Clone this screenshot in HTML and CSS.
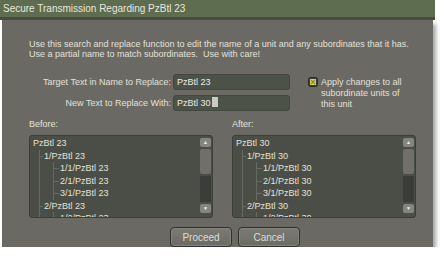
FILE: index.html
```html
<!DOCTYPE html>
<html lang="en">
<head>
    <meta charset="UTF-8">
    <title>Secure Transmission</title>
    <link rel="stylesheet" href="styles.css">
</head>
<body>
    <div class="window">
        <div class="titlebar">Secure Transmission Regarding PzBtl 23</div>
        <div class="dialog">
            <p class="intro">Use this search and replace function to edit the name of a unit and any subordinates that it has.<br>Use a partial name to match subordinates.&nbsp; Use with care!</p>

            <div class="fields">
                <div class="field-rows">
                    <div class="field">
                        <span class="field-label">Target Text in Name to Replace:</span>
                        <div class="text-input">PzBtl 23</div>
                    </div>
                    <div class="field">
                        <span class="field-label">New Text to Replace With:</span>
                        <div class="text-input">PzBtl 30<span class="caret"></span></div>
                    </div>
                </div>
                <div class="apply">
                    <svg class="check" width="10" height="10" viewBox="0 0 10 10">
                        <rect x="0.5" y="0.5" width="9" height="9" rx="2" fill="#3b3d33" stroke="#2c2d27"/>
                        <rect x="2" y="2" width="6" height="6" fill="#d9d15c"/>
                        <path d="M3 3 L7 7 M7 3 L3 7" stroke="#8c8638" stroke-width="1.2"/>
                    </svg>
                    <span>Apply changes to all<br>subordinate units of<br>this unit</span>
                </div>
            </div>

            <div class="lists">
                <div class="pane">
                    <div class="pane-label">Before:</div>
                    <div class="tree-box">
                        <div class="tree">
                            <div class="row">PzBtl 23</div>
                            <div class="group">
                                <div class="row branch">1/PzBtl 23</div>
                                <div class="group sub">
                                    <div class="row branch leaf">1/1/PzBtl 23</div>
                                    <div class="row branch leaf">2/1/PzBtl 23</div>
                                    <div class="row branch leaf">3/1/PzBtl 23</div>
                                </div>
                                <div class="row branch">2/PzBtl 23</div>
                                <div class="group sub">
                                    <div class="row branch leaf">1/2/PzBtl 23</div>
                                </div>
                            </div>
                        </div>
                        <div class="scrollbar">
                            <div class="scroll-btn">&#9650;</div>
                            <div class="thumb"></div>
                            <div class="track"></div>
                            <div class="scroll-btn">&#9660;</div>
                        </div>
                    </div>
                </div>
                <div class="pane">
                    <div class="pane-label">After:</div>
                    <div class="tree-box">
                        <div class="tree">
                            <div class="row">PzBtl 30</div>
                            <div class="group">
                                <div class="row branch">1/PzBtl 30</div>
                                <div class="group sub">
                                    <div class="row branch leaf">1/1/PzBtl 30</div>
                                    <div class="row branch leaf">2/1/PzBtl 30</div>
                                    <div class="row branch leaf">3/1/PzBtl 30</div>
                                </div>
                                <div class="row branch">2/PzBtl 30</div>
                                <div class="group sub">
                                    <div class="row branch leaf">1/2/PzBtl 30</div>
                                </div>
                            </div>
                        </div>
                        <div class="scrollbar">
                            <div class="scroll-btn">&#9650;</div>
                            <div class="thumb"></div>
                            <div class="track"></div>
                            <div class="scroll-btn">&#9660;</div>
                        </div>
                    </div>
                </div>
            </div>

            <div class="actions">
                <button class="dlg-button">Proceed</button>
                <button class="dlg-button">Cancel</button>
            </div>
        </div>
    </div>
</body>
</html>
```

FILE: styles.css
```css
body {
    margin: 0;
    background-color: #ffffff;
    font-family: "Liberation Sans", Arial, sans-serif;
    font-size: 9px;
    color: #e2e2d9;
}
.window {
    width: 435px;
}
.titlebar {
    height: 17px;
    line-height: 17px;
    padding-left: 3px;
    background-color: #5e6c50;
    color: #e8e8de;
    font-size: 10px;
    border-bottom: 3px solid #4a4a47;
}
.dialog {
    margin: 0 2px;
    height: 208px;
    padding: 19px 0 0 27px;
    background-color: #6a6963;
    box-shadow: 3px 4px 4px rgba(0,0,0,0.35);
}
.intro {
    margin: 0;
    line-height: 10px;
}

/* champs de saisie */
.fields {
    display: flex;
    margin-top: 15px;
}
.field-rows {
    display: flex;
    flex-direction: column;
    gap: 5px;
}
.field {
    display: flex;
    align-items: center;
    gap: 2px;
}
.field-label {
    width: 142px;
    text-align: right;
}
.text-input {
    width: 112px;
    height: 14px;
    line-height: 14px;
    padding-left: 3px;
    background-color: #4d5249;
    border: 1px solid #44473f;
    border-radius: 3px;
    color: #ecece4;
}
.caret {
    display: inline-block;
    width: 6px;
    height: 10px;
    margin-left: 1px;
    vertical-align: -1px;
    background-color: #c9c9c6;
}
.apply {
    display: flex;
    align-items: flex-start;
    gap: 3px;
    margin: 3px 0 0 18px;
    line-height: 11px;
}
.check {
    flex: none;
    margin-top: 0;
}

/* listes avant / après */
.lists {
    display: flex;
    gap: 19px;
    margin-top: 8px;
}
.pane-label {
    line-height: 10px;
    margin-bottom: 6px;
}
.tree-box {
    display: flex;
    width: 182px;
    height: 81px;
    background-color: #4a4e46;
    border: 1px solid #3c3f38;
    border-radius: 3px;
    overflow: hidden;
}
.tree {
    flex: 1;
    padding: 1px 0 0 3px;
    overflow: hidden;
}
.row {
    position: relative;
    height: 12.5px;
    line-height: 12.5px;
    white-space: nowrap;
}
.group {
    margin-left: 6px;
    border-left: 1px solid #676a60;
}
.group.sub {
    margin-left: 13px;
}
.branch {
    padding-left: 4px;
}
.leaf {
    padding-left: 6px;
}
.branch::before {
    content: "";
    position: absolute;
    left: 0;
    top: 6px;
    width: 3px;
    border-top: 1px solid #676a60;
}
.leaf::before {
    width: 5px;
}
.scrollbar {
    width: 11px;
    display: flex;
    flex-direction: column;
    gap: 2px;
    padding: 2px 1px 4px 0;
}
.scroll-btn {
    height: 9px;
    line-height: 9px;
    text-align: center;
    font-size: 5px;
    color: #f0f0f0;
    background-color: #85857f;
    border-radius: 2px;
}
.thumb {
    height: 25px;
    background-color: #706f69;
    border-radius: 2px;
}
.track {
    flex: 1;
    background-color: #3b3d39;
}

/* boutons */
.actions {
    display: flex;
    justify-content: center;
    gap: 6px;
    margin-top: 9px;
    padding-left: 8px;
}
.dlg-button {
    width: 62px;
    height: 20px;
    font-family: "Liberation Sans", Arial, sans-serif;
    font-size: 10px;
    color: #dcdcd3;
    background: linear-gradient(#7b7b74, #6b6b65);
    border: 1px solid #2f2f2d;
    border-radius: 4px;
    box-shadow: inset 0 0 0 1px #85857e;
    padding: 0;
}
```
